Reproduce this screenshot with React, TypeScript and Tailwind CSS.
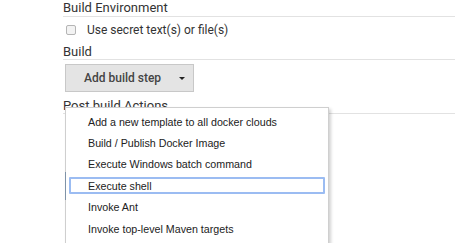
const items = [
  "Add a new template to all docker clouds",
  "Build / Publish Docker Image",
  "Execute Windows batch command",
  "Execute shell",
  "Invoke Ant",
  "Invoke top-level Maven targets",
];

const App = () => {
  return (
    <div className="relative w-[455px] h-[243px] overflow-hidden bg-white font-['Liberation_Sans',Arial,sans-serif] text-[#333]">
      <div className="pl-[63px] font-['Roboto',sans-serif]">
        <div className="h-[16px] text-[13px] leading-[16px]">Build Environment</div>
        <div className="h-px bg-[#e2e2e2]" />
        <div className="flex items-center h-[26px] pl-[3px]">
          <span className="w-[10px] h-[10px] rounded-[2px] border border-[#b5b5b5] bg-[#f3f3f3]" />
          <span className="ml-[11px] text-[12px]">Use secret text(s) or file(s)</span>
        </div>
        <div className="h-[16px] text-[13px] leading-[16px] pt-[1px]">Build</div>
        <div className="h-px bg-[#e2e2e2]" />
        <div className="pt-[4px] pl-[2px]">
          <button className="flex items-center w-[129px] h-[28px] border border-[#c8c8c8] bg-[#e4e4e4] text-[12px] font-medium text-[#444]">
            <span className="ml-[18px]">Add build step</span>
            <span className="ml-[18px] w-0 h-0 border-l-[3px] border-r-[3px] border-t-[3px] border-l-transparent border-r-transparent border-t-[#222]" />
          </button>
        </div>
        <div className="h-[21px] text-[13px] leading-[21px] pt-[3px]">Post build Actions</div>
        <div className="h-px bg-[#e2e2e2]" />
      </div>

      {/* dropdown menu */}
      <div className="absolute left-[65px] top-[107px] w-[264px] h-[140px] bg-white border border-[#cfcfcf] shadow-[2px_2px_3px_rgba(0,0,0,0.18)] pt-[3px] px-[3px]">
        <div className="absolute left-[-1px] top-[64px] w-px h-[28px] bg-[#7f93a8]" />
        {items.map((item) => {
          const active = item === "Execute shell";
          return (
            <div key={item} className="flex items-center h-[21.4px]">
              <div
                className={`flex items-center w-full h-[17px] text-[10.7px] text-[#222] ${
                  active ? "border-2 border-[#9bbcf2] rounded-[1px] pl-[17px]" : "pl-[19px]"
                }`}
              >
                {item}
              </div>
            </div>
          );
        })}
      </div>
    </div>
  );
};

export default App;
